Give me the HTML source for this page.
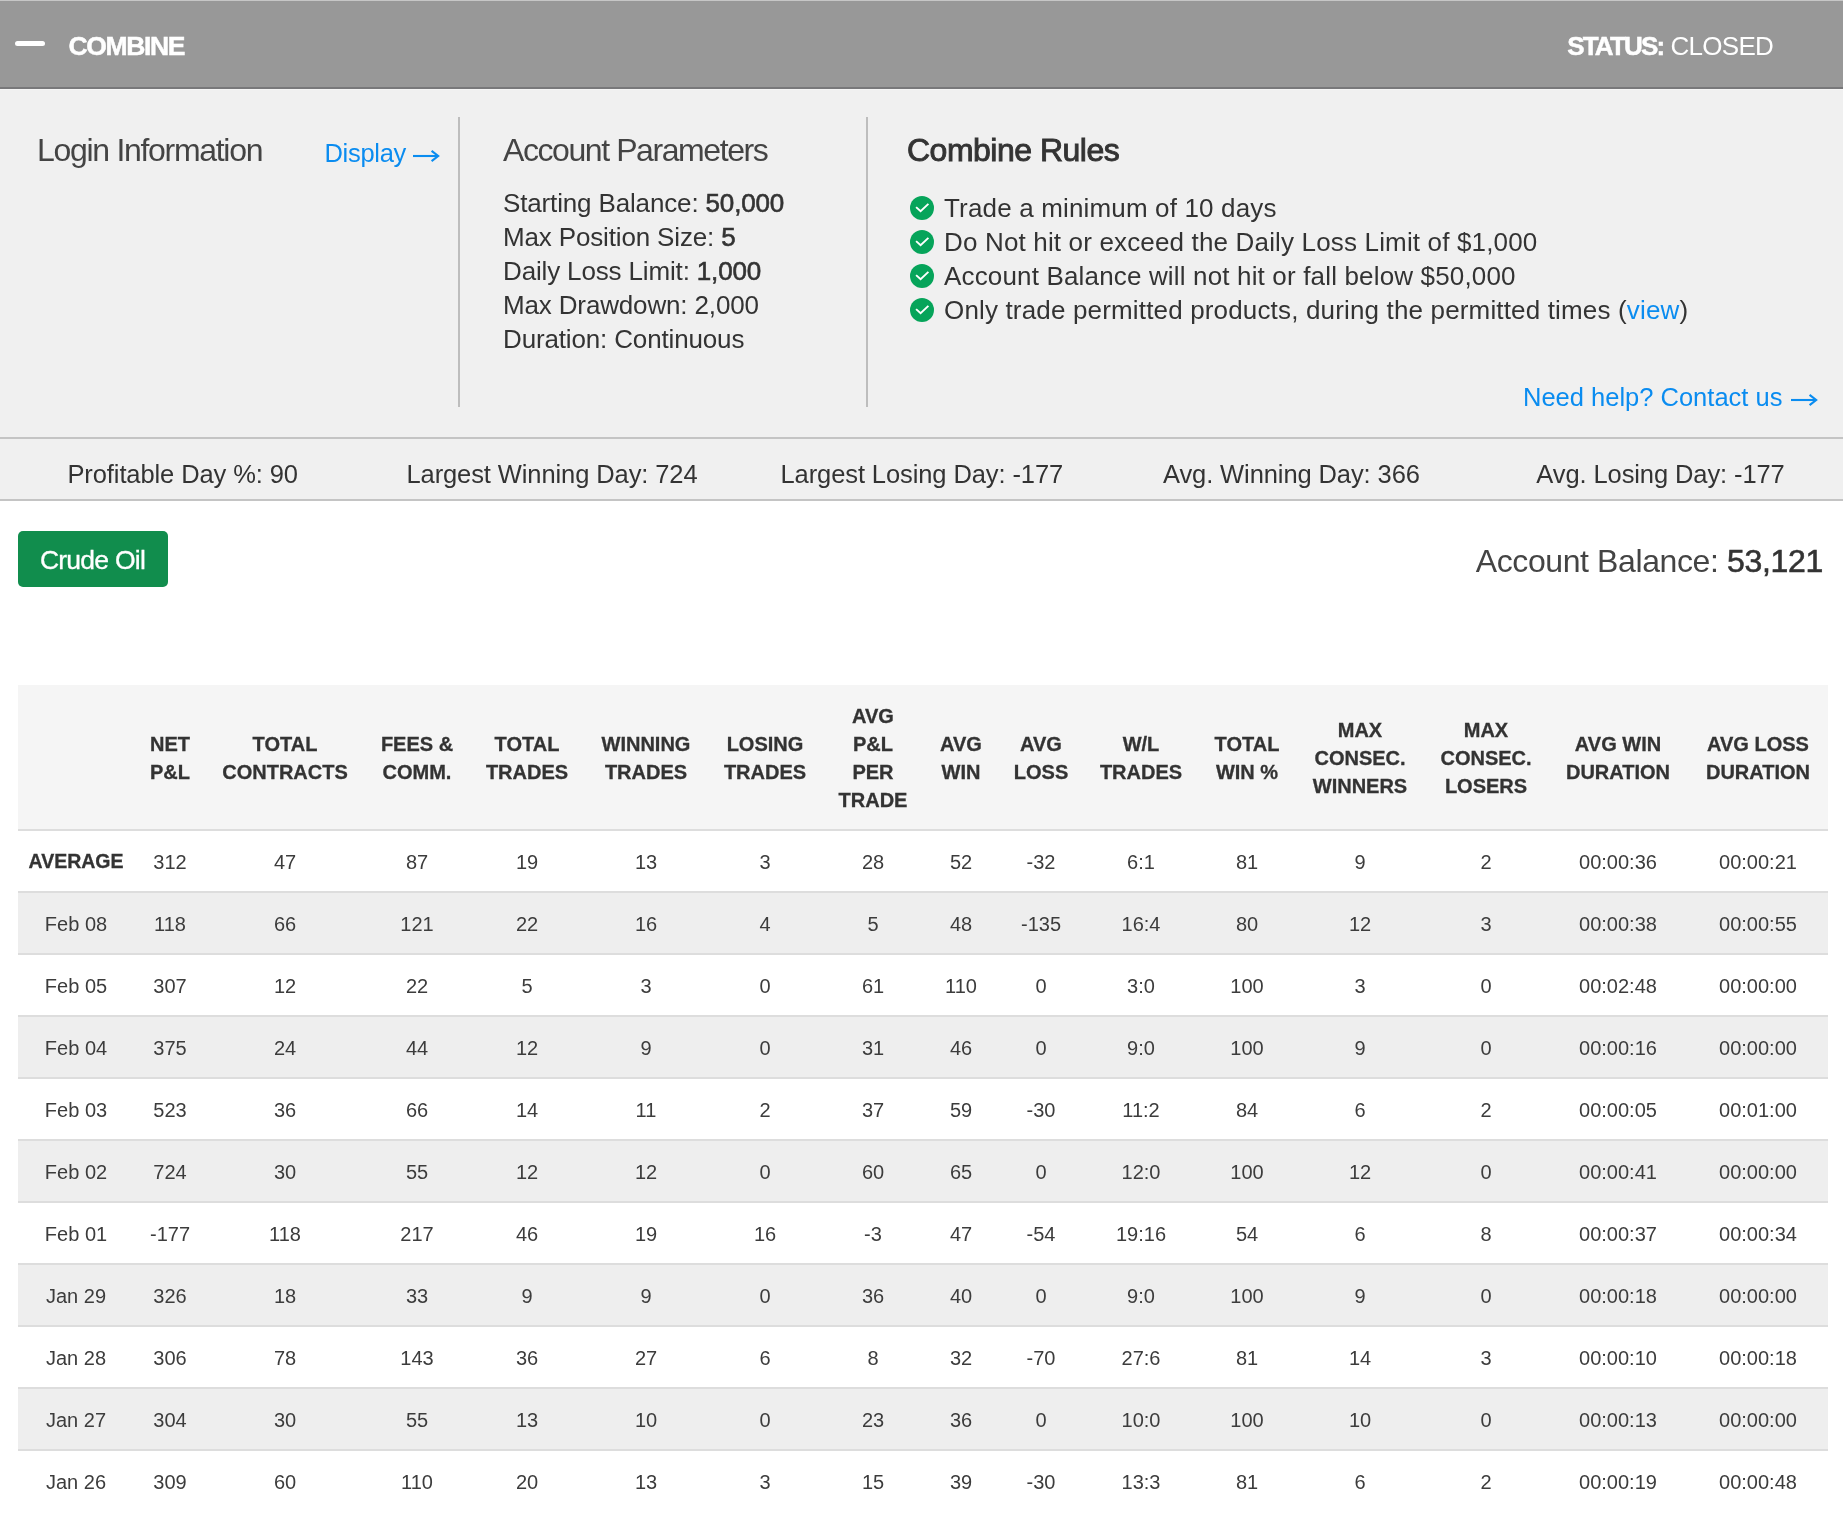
<!DOCTYPE html>
<html><head><meta charset="utf-8"><style>
html,body{margin:0;padding:0;background:#fff;}
body{width:1843px;height:1519px;position:relative;overflow:hidden;font-family:"Liberation Sans", sans-serif;}
.t{position:absolute;white-space:nowrap;}
.r{position:absolute;}
svg{display:block}
.md{-webkit-text-stroke:0.6px #333;}
.md2{-webkit-text-stroke:0.6px #333;letter-spacing:-0.3px}
</style></head><body>
<div id="wrap" style="position:absolute;left:0;top:0;width:1843px;height:1519px;will-change:transform">
<div class="r" style="left:0px;top:0px;width:1843px;height:1px;background:#c6c6c6;"></div>
<div class="r" style="left:0px;top:1px;width:1843px;height:86px;background:#989898;"></div>
<div class="r" style="left:0px;top:87px;width:1843px;height:2px;background:#78787a;"></div>
<div class="r" style="left:0px;top:89px;width:1843px;height:1px;background:#f5f5f5;"></div>
<div class="r" style="left:15px;top:40.6px;width:30px;height:5.4px;background:#fff;border-radius:3px;"></div>
<div class="t" style="top:30.41px;font-size:26.5px;line-height:32px;font-weight:700;color:#fff;letter-spacing:-1.35px;-webkit-text-stroke:0.5px #fff;left:68.5px;">COMBINE</div>
<div class="t" style="top:30.69px;font-size:26px;line-height:31px;font-weight:400;color:#fff;right:70px;text-align:right;"><span style="font-weight:700;-webkit-text-stroke:0.5px #fff;letter-spacing:-1.8px">STATUS:</span> <span style="letter-spacing:-0.75px">CLOSED</span></div>
<div class="r" style="left:0px;top:90px;width:1843px;height:347px;background:#f0f0f0;"></div>
<div class="t" style="top:131.11px;font-size:32px;line-height:38px;font-weight:400;color:#444;letter-spacing:-1.3px;left:37px;">Login Information</div>
<div class="t" style="top:138.46px;font-size:25.5px;line-height:31px;font-weight:400;color:#0a8cf0;letter-spacing:-0.3px;left:324.5px;">Display</div>
<div class="r" style="left:412.6px;top:149px;"><svg width="27.2" height="14" viewBox="0 0 27.2 14" style="display:block"><path d="M0 7 H24.2" stroke="#0a8cf0" stroke-width="2.1" fill="none"/><path d="M18.6 1.8 L25.2 7 L18.6 12.2" stroke="#0a8cf0" stroke-width="2.1" fill="none" stroke-linejoin="miter"/></svg></div>
<div class="r" style="left:458px;top:117px;width:2px;height:290px;background:#bdbdbd;"></div>
<div class="t" style="top:131.11px;font-size:32px;line-height:38px;font-weight:400;color:#444;letter-spacing:-1.42px;left:503px;">Account Parameters</div>
<div class="t" style="top:188.29px;font-size:26px;line-height:31px;font-weight:400;color:#333;letter-spacing:-0.15px;left:503px;">Starting Balance: <span class="md">50,000</span></div>
<div class="t" style="top:222.29px;font-size:26px;line-height:31px;font-weight:400;color:#333;letter-spacing:-0.15px;left:503px;">Max Position Size: <span class="md">5</span></div>
<div class="t" style="top:256.29px;font-size:26px;line-height:31px;font-weight:400;color:#333;letter-spacing:-0.15px;left:503px;">Daily Loss Limit: <span class="md">1,000</span></div>
<div class="t" style="top:290.29px;font-size:26px;line-height:31px;font-weight:400;color:#333;letter-spacing:-0.15px;left:503px;">Max Drawdown: 2,000</div>
<div class="t" style="top:324.29px;font-size:26px;line-height:31px;font-weight:400;color:#333;letter-spacing:-0.15px;left:503px;">Duration: Continuous</div>
<div class="r" style="left:866px;top:117px;width:2px;height:290px;background:#bdbdbd;"></div>
<div class="t" style="top:131.11px;font-size:32px;line-height:38px;font-weight:400;color:#333;letter-spacing:-0.5px;-webkit-text-stroke:0.9px #333;left:907px;">Combine Rules</div>
<div class="r" style="left:910px;top:195.9px;width:24px;height:24px"><svg width="24" height="24" viewBox="0 0 24 24"><circle cx="12" cy="12" r="12" fill="#06a45a"/><path d="M6.1 11.1 L10.6 15.3 L18.4 7.9" fill="none" stroke="#fff" stroke-width="1.9"/></svg></div>
<div class="t" style="top:192.69px;font-size:26px;line-height:31px;font-weight:400;color:#333;letter-spacing:0.16px;left:944px;">Trade a minimum of 10 days</div>
<div class="r" style="left:910px;top:229.9px;width:24px;height:24px"><svg width="24" height="24" viewBox="0 0 24 24"><circle cx="12" cy="12" r="12" fill="#06a45a"/><path d="M6.1 11.1 L10.6 15.3 L18.4 7.9" fill="none" stroke="#fff" stroke-width="1.9"/></svg></div>
<div class="t" style="top:226.69px;font-size:26px;line-height:31px;font-weight:400;color:#333;letter-spacing:0.16px;left:944px;">Do Not hit or exceed the Daily Loss Limit of $1,000</div>
<div class="r" style="left:910px;top:263.9px;width:24px;height:24px"><svg width="24" height="24" viewBox="0 0 24 24"><circle cx="12" cy="12" r="12" fill="#06a45a"/><path d="M6.1 11.1 L10.6 15.3 L18.4 7.9" fill="none" stroke="#fff" stroke-width="1.9"/></svg></div>
<div class="t" style="top:260.69px;font-size:26px;line-height:31px;font-weight:400;color:#333;letter-spacing:0.16px;left:944px;">Account Balance will not hit or fall below $50,000</div>
<div class="r" style="left:910px;top:297.9px;width:24px;height:24px"><svg width="24" height="24" viewBox="0 0 24 24"><circle cx="12" cy="12" r="12" fill="#06a45a"/><path d="M6.1 11.1 L10.6 15.3 L18.4 7.9" fill="none" stroke="#fff" stroke-width="1.9"/></svg></div>
<div class="t" style="top:294.69px;font-size:26px;line-height:31px;font-weight:400;color:#333;letter-spacing:0.16px;left:944px;">Only trade permitted products, during the permitted times (<span style="color:#0a8cf0">view</span>)</div>
<div class="t" style="top:382.36px;font-size:25.5px;line-height:31px;font-weight:400;color:#0a8cf0;left:1523px;">Need help? Contact us</div>
<div class="r" style="left:1790.6px;top:393px;"><svg width="27.2" height="14" viewBox="0 0 27.2 14" style="display:block"><path d="M0 7 H24.2" stroke="#0a8cf0" stroke-width="2.1" fill="none"/><path d="M18.6 1.8 L25.2 7 L18.6 12.2" stroke="#0a8cf0" stroke-width="2.1" fill="none" stroke-linejoin="miter"/></svg></div>
<div class="r" style="left:0px;top:437px;width:1843px;height:2px;background:#c4c4c4;"></div>
<div class="r" style="left:0px;top:439px;width:1843px;height:60px;background:#f0f0f0;"></div>
<div class="r" style="left:0px;top:499px;width:1843px;height:2px;background:#c4c4c4;"></div>
<div class="t" style="top:458.86px;font-size:25.5px;line-height:31px;font-weight:400;color:#333;letter-spacing:-0.1px;left:2.70px;width:360px;text-align:center;">Profitable Day %: 90</div>
<div class="t" style="top:458.86px;font-size:25.5px;line-height:31px;font-weight:400;color:#333;letter-spacing:-0.1px;left:372.00px;width:360px;text-align:center;">Largest Winning Day: 724</div>
<div class="t" style="top:458.86px;font-size:25.5px;line-height:31px;font-weight:400;color:#333;letter-spacing:-0.1px;left:741.80px;width:360px;text-align:center;">Largest Losing Day: -177</div>
<div class="t" style="top:458.86px;font-size:25.5px;line-height:31px;font-weight:400;color:#333;letter-spacing:-0.1px;left:1111.40px;width:360px;text-align:center;">Avg. Winning Day: 366</div>
<div class="t" style="top:458.86px;font-size:25.5px;line-height:31px;font-weight:400;color:#333;letter-spacing:-0.1px;left:1480.50px;width:360px;text-align:center;">Avg. Losing Day: -177</div>
<div class="r" style="left:18px;top:531px;width:150px;height:56px;background:#118d4d;border-radius:5px;"></div>
<div class="t" style="top:544.21px;font-size:26.5px;line-height:32px;font-weight:400;color:#fff;letter-spacing:-0.75px;-webkit-text-stroke:0.3px #fff;left:17.50px;width:150px;text-align:center;">Crude Oil</div>
<div class="t" style="top:542.41px;font-size:32px;line-height:38px;font-weight:400;color:#333;letter-spacing:-0.4px;right:20px;text-align:right;"><span style="color:#444">Account Balance:</span> <span class="md2">53,121</span></div>
<div class="r" style="left:18px;top:685px;width:1810px;height:144px;background:#f5f5f5;"></div>
<div class="r" style="left:18px;top:829px;width:1810px;height:2px;background:#dddddd;"></div>
<div class="t" style="top:732.27px;font-size:20px;line-height:24px;font-weight:700;color:#333;-webkit-text-stroke:0.3px #333;left:70.00px;width:200px;text-align:center;">NET</div>
<div class="t" style="top:760.27px;font-size:20px;line-height:24px;font-weight:700;color:#333;-webkit-text-stroke:0.3px #333;left:70.00px;width:200px;text-align:center;">P&amp;L</div>
<div class="t" style="top:732.27px;font-size:20px;line-height:24px;font-weight:700;color:#333;-webkit-text-stroke:0.3px #333;left:185.00px;width:200px;text-align:center;">TOTAL</div>
<div class="t" style="top:760.27px;font-size:20px;line-height:24px;font-weight:700;color:#333;-webkit-text-stroke:0.3px #333;left:185.00px;width:200px;text-align:center;">CONTRACTS</div>
<div class="t" style="top:732.27px;font-size:20px;line-height:24px;font-weight:700;color:#333;-webkit-text-stroke:0.3px #333;left:317.00px;width:200px;text-align:center;">FEES &amp;</div>
<div class="t" style="top:760.27px;font-size:20px;line-height:24px;font-weight:700;color:#333;-webkit-text-stroke:0.3px #333;left:317.00px;width:200px;text-align:center;">COMM.</div>
<div class="t" style="top:732.27px;font-size:20px;line-height:24px;font-weight:700;color:#333;-webkit-text-stroke:0.3px #333;left:427.00px;width:200px;text-align:center;">TOTAL</div>
<div class="t" style="top:760.27px;font-size:20px;line-height:24px;font-weight:700;color:#333;-webkit-text-stroke:0.3px #333;left:427.00px;width:200px;text-align:center;">TRADES</div>
<div class="t" style="top:732.27px;font-size:20px;line-height:24px;font-weight:700;color:#333;-webkit-text-stroke:0.3px #333;left:546.00px;width:200px;text-align:center;">WINNING</div>
<div class="t" style="top:760.27px;font-size:20px;line-height:24px;font-weight:700;color:#333;-webkit-text-stroke:0.3px #333;left:546.00px;width:200px;text-align:center;">TRADES</div>
<div class="t" style="top:732.27px;font-size:20px;line-height:24px;font-weight:700;color:#333;-webkit-text-stroke:0.3px #333;left:665.00px;width:200px;text-align:center;">LOSING</div>
<div class="t" style="top:760.27px;font-size:20px;line-height:24px;font-weight:700;color:#333;-webkit-text-stroke:0.3px #333;left:665.00px;width:200px;text-align:center;">TRADES</div>
<div class="t" style="top:704.27px;font-size:20px;line-height:24px;font-weight:700;color:#333;-webkit-text-stroke:0.3px #333;left:773.00px;width:200px;text-align:center;">AVG</div>
<div class="t" style="top:732.27px;font-size:20px;line-height:24px;font-weight:700;color:#333;-webkit-text-stroke:0.3px #333;left:773.00px;width:200px;text-align:center;">P&amp;L</div>
<div class="t" style="top:760.27px;font-size:20px;line-height:24px;font-weight:700;color:#333;-webkit-text-stroke:0.3px #333;left:773.00px;width:200px;text-align:center;">PER</div>
<div class="t" style="top:788.27px;font-size:20px;line-height:24px;font-weight:700;color:#333;-webkit-text-stroke:0.3px #333;left:773.00px;width:200px;text-align:center;">TRADE</div>
<div class="t" style="top:732.27px;font-size:20px;line-height:24px;font-weight:700;color:#333;-webkit-text-stroke:0.3px #333;left:861.00px;width:200px;text-align:center;">AVG</div>
<div class="t" style="top:760.27px;font-size:20px;line-height:24px;font-weight:700;color:#333;-webkit-text-stroke:0.3px #333;left:861.00px;width:200px;text-align:center;">WIN</div>
<div class="t" style="top:732.27px;font-size:20px;line-height:24px;font-weight:700;color:#333;-webkit-text-stroke:0.3px #333;left:941.00px;width:200px;text-align:center;">AVG</div>
<div class="t" style="top:760.27px;font-size:20px;line-height:24px;font-weight:700;color:#333;-webkit-text-stroke:0.3px #333;left:941.00px;width:200px;text-align:center;">LOSS</div>
<div class="t" style="top:732.27px;font-size:20px;line-height:24px;font-weight:700;color:#333;-webkit-text-stroke:0.3px #333;left:1041.00px;width:200px;text-align:center;">W/L</div>
<div class="t" style="top:760.27px;font-size:20px;line-height:24px;font-weight:700;color:#333;-webkit-text-stroke:0.3px #333;left:1041.00px;width:200px;text-align:center;">TRADES</div>
<div class="t" style="top:732.27px;font-size:20px;line-height:24px;font-weight:700;color:#333;-webkit-text-stroke:0.3px #333;left:1147.00px;width:200px;text-align:center;">TOTAL</div>
<div class="t" style="top:760.27px;font-size:20px;line-height:24px;font-weight:700;color:#333;-webkit-text-stroke:0.3px #333;left:1147.00px;width:200px;text-align:center;">WIN %</div>
<div class="t" style="top:718.27px;font-size:20px;line-height:24px;font-weight:700;color:#333;-webkit-text-stroke:0.3px #333;left:1260.00px;width:200px;text-align:center;">MAX</div>
<div class="t" style="top:746.27px;font-size:20px;line-height:24px;font-weight:700;color:#333;-webkit-text-stroke:0.3px #333;left:1260.00px;width:200px;text-align:center;">CONSEC.</div>
<div class="t" style="top:774.27px;font-size:20px;line-height:24px;font-weight:700;color:#333;-webkit-text-stroke:0.3px #333;left:1260.00px;width:200px;text-align:center;">WINNERS</div>
<div class="t" style="top:718.27px;font-size:20px;line-height:24px;font-weight:700;color:#333;-webkit-text-stroke:0.3px #333;left:1386.00px;width:200px;text-align:center;">MAX</div>
<div class="t" style="top:746.27px;font-size:20px;line-height:24px;font-weight:700;color:#333;-webkit-text-stroke:0.3px #333;left:1386.00px;width:200px;text-align:center;">CONSEC.</div>
<div class="t" style="top:774.27px;font-size:20px;line-height:24px;font-weight:700;color:#333;-webkit-text-stroke:0.3px #333;left:1386.00px;width:200px;text-align:center;">LOSERS</div>
<div class="t" style="top:732.27px;font-size:20px;line-height:24px;font-weight:700;color:#333;-webkit-text-stroke:0.3px #333;left:1518.00px;width:200px;text-align:center;">AVG WIN</div>
<div class="t" style="top:760.27px;font-size:20px;line-height:24px;font-weight:700;color:#333;-webkit-text-stroke:0.3px #333;left:1518.00px;width:200px;text-align:center;">DURATION</div>
<div class="t" style="top:732.27px;font-size:20px;line-height:24px;font-weight:700;color:#333;-webkit-text-stroke:0.3px #333;left:1658.00px;width:200px;text-align:center;">AVG LOSS</div>
<div class="t" style="top:760.27px;font-size:20px;line-height:24px;font-weight:700;color:#333;-webkit-text-stroke:0.3px #333;left:1658.00px;width:200px;text-align:center;">DURATION</div>
<div class="r" style="left:18px;top:891px;width:1810px;height:2px;background:#dddddd;"></div>
<div class="t" style="top:850.44px;font-size:19.5px;line-height:23px;font-weight:700;color:#333;-webkit-text-stroke:0.3px #333;left:-24.00px;width:200px;text-align:center;">AVERAGE</div>
<div class="t" style="top:849.77px;font-size:20px;line-height:24px;font-weight:400;color:#3c3c3c;left:70.00px;width:200px;text-align:center;">312</div>
<div class="t" style="top:849.77px;font-size:20px;line-height:24px;font-weight:400;color:#3c3c3c;left:185.00px;width:200px;text-align:center;">47</div>
<div class="t" style="top:849.77px;font-size:20px;line-height:24px;font-weight:400;color:#3c3c3c;left:317.00px;width:200px;text-align:center;">87</div>
<div class="t" style="top:849.77px;font-size:20px;line-height:24px;font-weight:400;color:#3c3c3c;left:427.00px;width:200px;text-align:center;">19</div>
<div class="t" style="top:849.77px;font-size:20px;line-height:24px;font-weight:400;color:#3c3c3c;left:546.00px;width:200px;text-align:center;">13</div>
<div class="t" style="top:849.77px;font-size:20px;line-height:24px;font-weight:400;color:#3c3c3c;left:665.00px;width:200px;text-align:center;">3</div>
<div class="t" style="top:849.77px;font-size:20px;line-height:24px;font-weight:400;color:#3c3c3c;left:773.00px;width:200px;text-align:center;">28</div>
<div class="t" style="top:849.77px;font-size:20px;line-height:24px;font-weight:400;color:#3c3c3c;left:861.00px;width:200px;text-align:center;">52</div>
<div class="t" style="top:849.77px;font-size:20px;line-height:24px;font-weight:400;color:#3c3c3c;left:941.00px;width:200px;text-align:center;">-32</div>
<div class="t" style="top:849.77px;font-size:20px;line-height:24px;font-weight:400;color:#3c3c3c;left:1041.00px;width:200px;text-align:center;">6:1</div>
<div class="t" style="top:849.77px;font-size:20px;line-height:24px;font-weight:400;color:#3c3c3c;left:1147.00px;width:200px;text-align:center;">81</div>
<div class="t" style="top:849.77px;font-size:20px;line-height:24px;font-weight:400;color:#3c3c3c;left:1260.00px;width:200px;text-align:center;">9</div>
<div class="t" style="top:849.77px;font-size:20px;line-height:24px;font-weight:400;color:#3c3c3c;left:1386.00px;width:200px;text-align:center;">2</div>
<div class="t" style="top:849.77px;font-size:20px;line-height:24px;font-weight:400;color:#3c3c3c;left:1518.00px;width:200px;text-align:center;">00:00:36</div>
<div class="t" style="top:849.77px;font-size:20px;line-height:24px;font-weight:400;color:#3c3c3c;left:1658.00px;width:200px;text-align:center;">00:00:21</div>
<div class="r" style="left:18px;top:893px;width:1810px;height:60px;background:#eeeeee;"></div>
<div class="r" style="left:18px;top:953px;width:1810px;height:2px;background:#dddddd;"></div>
<div class="t" style="top:911.77px;font-size:20px;line-height:24px;font-weight:400;color:#3c3c3c;left:-24.00px;width:200px;text-align:center;">Feb 08</div>
<div class="t" style="top:911.77px;font-size:20px;line-height:24px;font-weight:400;color:#3c3c3c;left:70.00px;width:200px;text-align:center;">118</div>
<div class="t" style="top:911.77px;font-size:20px;line-height:24px;font-weight:400;color:#3c3c3c;left:185.00px;width:200px;text-align:center;">66</div>
<div class="t" style="top:911.77px;font-size:20px;line-height:24px;font-weight:400;color:#3c3c3c;left:317.00px;width:200px;text-align:center;">121</div>
<div class="t" style="top:911.77px;font-size:20px;line-height:24px;font-weight:400;color:#3c3c3c;left:427.00px;width:200px;text-align:center;">22</div>
<div class="t" style="top:911.77px;font-size:20px;line-height:24px;font-weight:400;color:#3c3c3c;left:546.00px;width:200px;text-align:center;">16</div>
<div class="t" style="top:911.77px;font-size:20px;line-height:24px;font-weight:400;color:#3c3c3c;left:665.00px;width:200px;text-align:center;">4</div>
<div class="t" style="top:911.77px;font-size:20px;line-height:24px;font-weight:400;color:#3c3c3c;left:773.00px;width:200px;text-align:center;">5</div>
<div class="t" style="top:911.77px;font-size:20px;line-height:24px;font-weight:400;color:#3c3c3c;left:861.00px;width:200px;text-align:center;">48</div>
<div class="t" style="top:911.77px;font-size:20px;line-height:24px;font-weight:400;color:#3c3c3c;left:941.00px;width:200px;text-align:center;">-135</div>
<div class="t" style="top:911.77px;font-size:20px;line-height:24px;font-weight:400;color:#3c3c3c;left:1041.00px;width:200px;text-align:center;">16:4</div>
<div class="t" style="top:911.77px;font-size:20px;line-height:24px;font-weight:400;color:#3c3c3c;left:1147.00px;width:200px;text-align:center;">80</div>
<div class="t" style="top:911.77px;font-size:20px;line-height:24px;font-weight:400;color:#3c3c3c;left:1260.00px;width:200px;text-align:center;">12</div>
<div class="t" style="top:911.77px;font-size:20px;line-height:24px;font-weight:400;color:#3c3c3c;left:1386.00px;width:200px;text-align:center;">3</div>
<div class="t" style="top:911.77px;font-size:20px;line-height:24px;font-weight:400;color:#3c3c3c;left:1518.00px;width:200px;text-align:center;">00:00:38</div>
<div class="t" style="top:911.77px;font-size:20px;line-height:24px;font-weight:400;color:#3c3c3c;left:1658.00px;width:200px;text-align:center;">00:00:55</div>
<div class="r" style="left:18px;top:1015px;width:1810px;height:2px;background:#dddddd;"></div>
<div class="t" style="top:973.77px;font-size:20px;line-height:24px;font-weight:400;color:#3c3c3c;left:-24.00px;width:200px;text-align:center;">Feb 05</div>
<div class="t" style="top:973.77px;font-size:20px;line-height:24px;font-weight:400;color:#3c3c3c;left:70.00px;width:200px;text-align:center;">307</div>
<div class="t" style="top:973.77px;font-size:20px;line-height:24px;font-weight:400;color:#3c3c3c;left:185.00px;width:200px;text-align:center;">12</div>
<div class="t" style="top:973.77px;font-size:20px;line-height:24px;font-weight:400;color:#3c3c3c;left:317.00px;width:200px;text-align:center;">22</div>
<div class="t" style="top:973.77px;font-size:20px;line-height:24px;font-weight:400;color:#3c3c3c;left:427.00px;width:200px;text-align:center;">5</div>
<div class="t" style="top:973.77px;font-size:20px;line-height:24px;font-weight:400;color:#3c3c3c;left:546.00px;width:200px;text-align:center;">3</div>
<div class="t" style="top:973.77px;font-size:20px;line-height:24px;font-weight:400;color:#3c3c3c;left:665.00px;width:200px;text-align:center;">0</div>
<div class="t" style="top:973.77px;font-size:20px;line-height:24px;font-weight:400;color:#3c3c3c;left:773.00px;width:200px;text-align:center;">61</div>
<div class="t" style="top:973.77px;font-size:20px;line-height:24px;font-weight:400;color:#3c3c3c;left:861.00px;width:200px;text-align:center;">110</div>
<div class="t" style="top:973.77px;font-size:20px;line-height:24px;font-weight:400;color:#3c3c3c;left:941.00px;width:200px;text-align:center;">0</div>
<div class="t" style="top:973.77px;font-size:20px;line-height:24px;font-weight:400;color:#3c3c3c;left:1041.00px;width:200px;text-align:center;">3:0</div>
<div class="t" style="top:973.77px;font-size:20px;line-height:24px;font-weight:400;color:#3c3c3c;left:1147.00px;width:200px;text-align:center;">100</div>
<div class="t" style="top:973.77px;font-size:20px;line-height:24px;font-weight:400;color:#3c3c3c;left:1260.00px;width:200px;text-align:center;">3</div>
<div class="t" style="top:973.77px;font-size:20px;line-height:24px;font-weight:400;color:#3c3c3c;left:1386.00px;width:200px;text-align:center;">0</div>
<div class="t" style="top:973.77px;font-size:20px;line-height:24px;font-weight:400;color:#3c3c3c;left:1518.00px;width:200px;text-align:center;">00:02:48</div>
<div class="t" style="top:973.77px;font-size:20px;line-height:24px;font-weight:400;color:#3c3c3c;left:1658.00px;width:200px;text-align:center;">00:00:00</div>
<div class="r" style="left:18px;top:1017px;width:1810px;height:60px;background:#eeeeee;"></div>
<div class="r" style="left:18px;top:1077px;width:1810px;height:2px;background:#dddddd;"></div>
<div class="t" style="top:1035.77px;font-size:20px;line-height:24px;font-weight:400;color:#3c3c3c;left:-24.00px;width:200px;text-align:center;">Feb 04</div>
<div class="t" style="top:1035.77px;font-size:20px;line-height:24px;font-weight:400;color:#3c3c3c;left:70.00px;width:200px;text-align:center;">375</div>
<div class="t" style="top:1035.77px;font-size:20px;line-height:24px;font-weight:400;color:#3c3c3c;left:185.00px;width:200px;text-align:center;">24</div>
<div class="t" style="top:1035.77px;font-size:20px;line-height:24px;font-weight:400;color:#3c3c3c;left:317.00px;width:200px;text-align:center;">44</div>
<div class="t" style="top:1035.77px;font-size:20px;line-height:24px;font-weight:400;color:#3c3c3c;left:427.00px;width:200px;text-align:center;">12</div>
<div class="t" style="top:1035.77px;font-size:20px;line-height:24px;font-weight:400;color:#3c3c3c;left:546.00px;width:200px;text-align:center;">9</div>
<div class="t" style="top:1035.77px;font-size:20px;line-height:24px;font-weight:400;color:#3c3c3c;left:665.00px;width:200px;text-align:center;">0</div>
<div class="t" style="top:1035.77px;font-size:20px;line-height:24px;font-weight:400;color:#3c3c3c;left:773.00px;width:200px;text-align:center;">31</div>
<div class="t" style="top:1035.77px;font-size:20px;line-height:24px;font-weight:400;color:#3c3c3c;left:861.00px;width:200px;text-align:center;">46</div>
<div class="t" style="top:1035.77px;font-size:20px;line-height:24px;font-weight:400;color:#3c3c3c;left:941.00px;width:200px;text-align:center;">0</div>
<div class="t" style="top:1035.77px;font-size:20px;line-height:24px;font-weight:400;color:#3c3c3c;left:1041.00px;width:200px;text-align:center;">9:0</div>
<div class="t" style="top:1035.77px;font-size:20px;line-height:24px;font-weight:400;color:#3c3c3c;left:1147.00px;width:200px;text-align:center;">100</div>
<div class="t" style="top:1035.77px;font-size:20px;line-height:24px;font-weight:400;color:#3c3c3c;left:1260.00px;width:200px;text-align:center;">9</div>
<div class="t" style="top:1035.77px;font-size:20px;line-height:24px;font-weight:400;color:#3c3c3c;left:1386.00px;width:200px;text-align:center;">0</div>
<div class="t" style="top:1035.77px;font-size:20px;line-height:24px;font-weight:400;color:#3c3c3c;left:1518.00px;width:200px;text-align:center;">00:00:16</div>
<div class="t" style="top:1035.77px;font-size:20px;line-height:24px;font-weight:400;color:#3c3c3c;left:1658.00px;width:200px;text-align:center;">00:00:00</div>
<div class="r" style="left:18px;top:1139px;width:1810px;height:2px;background:#dddddd;"></div>
<div class="t" style="top:1097.77px;font-size:20px;line-height:24px;font-weight:400;color:#3c3c3c;left:-24.00px;width:200px;text-align:center;">Feb 03</div>
<div class="t" style="top:1097.77px;font-size:20px;line-height:24px;font-weight:400;color:#3c3c3c;left:70.00px;width:200px;text-align:center;">523</div>
<div class="t" style="top:1097.77px;font-size:20px;line-height:24px;font-weight:400;color:#3c3c3c;left:185.00px;width:200px;text-align:center;">36</div>
<div class="t" style="top:1097.77px;font-size:20px;line-height:24px;font-weight:400;color:#3c3c3c;left:317.00px;width:200px;text-align:center;">66</div>
<div class="t" style="top:1097.77px;font-size:20px;line-height:24px;font-weight:400;color:#3c3c3c;left:427.00px;width:200px;text-align:center;">14</div>
<div class="t" style="top:1097.77px;font-size:20px;line-height:24px;font-weight:400;color:#3c3c3c;left:546.00px;width:200px;text-align:center;">11</div>
<div class="t" style="top:1097.77px;font-size:20px;line-height:24px;font-weight:400;color:#3c3c3c;left:665.00px;width:200px;text-align:center;">2</div>
<div class="t" style="top:1097.77px;font-size:20px;line-height:24px;font-weight:400;color:#3c3c3c;left:773.00px;width:200px;text-align:center;">37</div>
<div class="t" style="top:1097.77px;font-size:20px;line-height:24px;font-weight:400;color:#3c3c3c;left:861.00px;width:200px;text-align:center;">59</div>
<div class="t" style="top:1097.77px;font-size:20px;line-height:24px;font-weight:400;color:#3c3c3c;left:941.00px;width:200px;text-align:center;">-30</div>
<div class="t" style="top:1097.77px;font-size:20px;line-height:24px;font-weight:400;color:#3c3c3c;left:1041.00px;width:200px;text-align:center;">11:2</div>
<div class="t" style="top:1097.77px;font-size:20px;line-height:24px;font-weight:400;color:#3c3c3c;left:1147.00px;width:200px;text-align:center;">84</div>
<div class="t" style="top:1097.77px;font-size:20px;line-height:24px;font-weight:400;color:#3c3c3c;left:1260.00px;width:200px;text-align:center;">6</div>
<div class="t" style="top:1097.77px;font-size:20px;line-height:24px;font-weight:400;color:#3c3c3c;left:1386.00px;width:200px;text-align:center;">2</div>
<div class="t" style="top:1097.77px;font-size:20px;line-height:24px;font-weight:400;color:#3c3c3c;left:1518.00px;width:200px;text-align:center;">00:00:05</div>
<div class="t" style="top:1097.77px;font-size:20px;line-height:24px;font-weight:400;color:#3c3c3c;left:1658.00px;width:200px;text-align:center;">00:01:00</div>
<div class="r" style="left:18px;top:1141px;width:1810px;height:60px;background:#eeeeee;"></div>
<div class="r" style="left:18px;top:1201px;width:1810px;height:2px;background:#dddddd;"></div>
<div class="t" style="top:1159.77px;font-size:20px;line-height:24px;font-weight:400;color:#3c3c3c;left:-24.00px;width:200px;text-align:center;">Feb 02</div>
<div class="t" style="top:1159.77px;font-size:20px;line-height:24px;font-weight:400;color:#3c3c3c;left:70.00px;width:200px;text-align:center;">724</div>
<div class="t" style="top:1159.77px;font-size:20px;line-height:24px;font-weight:400;color:#3c3c3c;left:185.00px;width:200px;text-align:center;">30</div>
<div class="t" style="top:1159.77px;font-size:20px;line-height:24px;font-weight:400;color:#3c3c3c;left:317.00px;width:200px;text-align:center;">55</div>
<div class="t" style="top:1159.77px;font-size:20px;line-height:24px;font-weight:400;color:#3c3c3c;left:427.00px;width:200px;text-align:center;">12</div>
<div class="t" style="top:1159.77px;font-size:20px;line-height:24px;font-weight:400;color:#3c3c3c;left:546.00px;width:200px;text-align:center;">12</div>
<div class="t" style="top:1159.77px;font-size:20px;line-height:24px;font-weight:400;color:#3c3c3c;left:665.00px;width:200px;text-align:center;">0</div>
<div class="t" style="top:1159.77px;font-size:20px;line-height:24px;font-weight:400;color:#3c3c3c;left:773.00px;width:200px;text-align:center;">60</div>
<div class="t" style="top:1159.77px;font-size:20px;line-height:24px;font-weight:400;color:#3c3c3c;left:861.00px;width:200px;text-align:center;">65</div>
<div class="t" style="top:1159.77px;font-size:20px;line-height:24px;font-weight:400;color:#3c3c3c;left:941.00px;width:200px;text-align:center;">0</div>
<div class="t" style="top:1159.77px;font-size:20px;line-height:24px;font-weight:400;color:#3c3c3c;left:1041.00px;width:200px;text-align:center;">12:0</div>
<div class="t" style="top:1159.77px;font-size:20px;line-height:24px;font-weight:400;color:#3c3c3c;left:1147.00px;width:200px;text-align:center;">100</div>
<div class="t" style="top:1159.77px;font-size:20px;line-height:24px;font-weight:400;color:#3c3c3c;left:1260.00px;width:200px;text-align:center;">12</div>
<div class="t" style="top:1159.77px;font-size:20px;line-height:24px;font-weight:400;color:#3c3c3c;left:1386.00px;width:200px;text-align:center;">0</div>
<div class="t" style="top:1159.77px;font-size:20px;line-height:24px;font-weight:400;color:#3c3c3c;left:1518.00px;width:200px;text-align:center;">00:00:41</div>
<div class="t" style="top:1159.77px;font-size:20px;line-height:24px;font-weight:400;color:#3c3c3c;left:1658.00px;width:200px;text-align:center;">00:00:00</div>
<div class="r" style="left:18px;top:1263px;width:1810px;height:2px;background:#dddddd;"></div>
<div class="t" style="top:1221.77px;font-size:20px;line-height:24px;font-weight:400;color:#3c3c3c;left:-24.00px;width:200px;text-align:center;">Feb 01</div>
<div class="t" style="top:1221.77px;font-size:20px;line-height:24px;font-weight:400;color:#3c3c3c;left:70.00px;width:200px;text-align:center;">-177</div>
<div class="t" style="top:1221.77px;font-size:20px;line-height:24px;font-weight:400;color:#3c3c3c;left:185.00px;width:200px;text-align:center;">118</div>
<div class="t" style="top:1221.77px;font-size:20px;line-height:24px;font-weight:400;color:#3c3c3c;left:317.00px;width:200px;text-align:center;">217</div>
<div class="t" style="top:1221.77px;font-size:20px;line-height:24px;font-weight:400;color:#3c3c3c;left:427.00px;width:200px;text-align:center;">46</div>
<div class="t" style="top:1221.77px;font-size:20px;line-height:24px;font-weight:400;color:#3c3c3c;left:546.00px;width:200px;text-align:center;">19</div>
<div class="t" style="top:1221.77px;font-size:20px;line-height:24px;font-weight:400;color:#3c3c3c;left:665.00px;width:200px;text-align:center;">16</div>
<div class="t" style="top:1221.77px;font-size:20px;line-height:24px;font-weight:400;color:#3c3c3c;left:773.00px;width:200px;text-align:center;">-3</div>
<div class="t" style="top:1221.77px;font-size:20px;line-height:24px;font-weight:400;color:#3c3c3c;left:861.00px;width:200px;text-align:center;">47</div>
<div class="t" style="top:1221.77px;font-size:20px;line-height:24px;font-weight:400;color:#3c3c3c;left:941.00px;width:200px;text-align:center;">-54</div>
<div class="t" style="top:1221.77px;font-size:20px;line-height:24px;font-weight:400;color:#3c3c3c;left:1041.00px;width:200px;text-align:center;">19:16</div>
<div class="t" style="top:1221.77px;font-size:20px;line-height:24px;font-weight:400;color:#3c3c3c;left:1147.00px;width:200px;text-align:center;">54</div>
<div class="t" style="top:1221.77px;font-size:20px;line-height:24px;font-weight:400;color:#3c3c3c;left:1260.00px;width:200px;text-align:center;">6</div>
<div class="t" style="top:1221.77px;font-size:20px;line-height:24px;font-weight:400;color:#3c3c3c;left:1386.00px;width:200px;text-align:center;">8</div>
<div class="t" style="top:1221.77px;font-size:20px;line-height:24px;font-weight:400;color:#3c3c3c;left:1518.00px;width:200px;text-align:center;">00:00:37</div>
<div class="t" style="top:1221.77px;font-size:20px;line-height:24px;font-weight:400;color:#3c3c3c;left:1658.00px;width:200px;text-align:center;">00:00:34</div>
<div class="r" style="left:18px;top:1265px;width:1810px;height:60px;background:#eeeeee;"></div>
<div class="r" style="left:18px;top:1325px;width:1810px;height:2px;background:#dddddd;"></div>
<div class="t" style="top:1283.77px;font-size:20px;line-height:24px;font-weight:400;color:#3c3c3c;left:-24.00px;width:200px;text-align:center;">Jan 29</div>
<div class="t" style="top:1283.77px;font-size:20px;line-height:24px;font-weight:400;color:#3c3c3c;left:70.00px;width:200px;text-align:center;">326</div>
<div class="t" style="top:1283.77px;font-size:20px;line-height:24px;font-weight:400;color:#3c3c3c;left:185.00px;width:200px;text-align:center;">18</div>
<div class="t" style="top:1283.77px;font-size:20px;line-height:24px;font-weight:400;color:#3c3c3c;left:317.00px;width:200px;text-align:center;">33</div>
<div class="t" style="top:1283.77px;font-size:20px;line-height:24px;font-weight:400;color:#3c3c3c;left:427.00px;width:200px;text-align:center;">9</div>
<div class="t" style="top:1283.77px;font-size:20px;line-height:24px;font-weight:400;color:#3c3c3c;left:546.00px;width:200px;text-align:center;">9</div>
<div class="t" style="top:1283.77px;font-size:20px;line-height:24px;font-weight:400;color:#3c3c3c;left:665.00px;width:200px;text-align:center;">0</div>
<div class="t" style="top:1283.77px;font-size:20px;line-height:24px;font-weight:400;color:#3c3c3c;left:773.00px;width:200px;text-align:center;">36</div>
<div class="t" style="top:1283.77px;font-size:20px;line-height:24px;font-weight:400;color:#3c3c3c;left:861.00px;width:200px;text-align:center;">40</div>
<div class="t" style="top:1283.77px;font-size:20px;line-height:24px;font-weight:400;color:#3c3c3c;left:941.00px;width:200px;text-align:center;">0</div>
<div class="t" style="top:1283.77px;font-size:20px;line-height:24px;font-weight:400;color:#3c3c3c;left:1041.00px;width:200px;text-align:center;">9:0</div>
<div class="t" style="top:1283.77px;font-size:20px;line-height:24px;font-weight:400;color:#3c3c3c;left:1147.00px;width:200px;text-align:center;">100</div>
<div class="t" style="top:1283.77px;font-size:20px;line-height:24px;font-weight:400;color:#3c3c3c;left:1260.00px;width:200px;text-align:center;">9</div>
<div class="t" style="top:1283.77px;font-size:20px;line-height:24px;font-weight:400;color:#3c3c3c;left:1386.00px;width:200px;text-align:center;">0</div>
<div class="t" style="top:1283.77px;font-size:20px;line-height:24px;font-weight:400;color:#3c3c3c;left:1518.00px;width:200px;text-align:center;">00:00:18</div>
<div class="t" style="top:1283.77px;font-size:20px;line-height:24px;font-weight:400;color:#3c3c3c;left:1658.00px;width:200px;text-align:center;">00:00:00</div>
<div class="r" style="left:18px;top:1387px;width:1810px;height:2px;background:#dddddd;"></div>
<div class="t" style="top:1345.77px;font-size:20px;line-height:24px;font-weight:400;color:#3c3c3c;left:-24.00px;width:200px;text-align:center;">Jan 28</div>
<div class="t" style="top:1345.77px;font-size:20px;line-height:24px;font-weight:400;color:#3c3c3c;left:70.00px;width:200px;text-align:center;">306</div>
<div class="t" style="top:1345.77px;font-size:20px;line-height:24px;font-weight:400;color:#3c3c3c;left:185.00px;width:200px;text-align:center;">78</div>
<div class="t" style="top:1345.77px;font-size:20px;line-height:24px;font-weight:400;color:#3c3c3c;left:317.00px;width:200px;text-align:center;">143</div>
<div class="t" style="top:1345.77px;font-size:20px;line-height:24px;font-weight:400;color:#3c3c3c;left:427.00px;width:200px;text-align:center;">36</div>
<div class="t" style="top:1345.77px;font-size:20px;line-height:24px;font-weight:400;color:#3c3c3c;left:546.00px;width:200px;text-align:center;">27</div>
<div class="t" style="top:1345.77px;font-size:20px;line-height:24px;font-weight:400;color:#3c3c3c;left:665.00px;width:200px;text-align:center;">6</div>
<div class="t" style="top:1345.77px;font-size:20px;line-height:24px;font-weight:400;color:#3c3c3c;left:773.00px;width:200px;text-align:center;">8</div>
<div class="t" style="top:1345.77px;font-size:20px;line-height:24px;font-weight:400;color:#3c3c3c;left:861.00px;width:200px;text-align:center;">32</div>
<div class="t" style="top:1345.77px;font-size:20px;line-height:24px;font-weight:400;color:#3c3c3c;left:941.00px;width:200px;text-align:center;">-70</div>
<div class="t" style="top:1345.77px;font-size:20px;line-height:24px;font-weight:400;color:#3c3c3c;left:1041.00px;width:200px;text-align:center;">27:6</div>
<div class="t" style="top:1345.77px;font-size:20px;line-height:24px;font-weight:400;color:#3c3c3c;left:1147.00px;width:200px;text-align:center;">81</div>
<div class="t" style="top:1345.77px;font-size:20px;line-height:24px;font-weight:400;color:#3c3c3c;left:1260.00px;width:200px;text-align:center;">14</div>
<div class="t" style="top:1345.77px;font-size:20px;line-height:24px;font-weight:400;color:#3c3c3c;left:1386.00px;width:200px;text-align:center;">3</div>
<div class="t" style="top:1345.77px;font-size:20px;line-height:24px;font-weight:400;color:#3c3c3c;left:1518.00px;width:200px;text-align:center;">00:00:10</div>
<div class="t" style="top:1345.77px;font-size:20px;line-height:24px;font-weight:400;color:#3c3c3c;left:1658.00px;width:200px;text-align:center;">00:00:18</div>
<div class="r" style="left:18px;top:1389px;width:1810px;height:60px;background:#eeeeee;"></div>
<div class="r" style="left:18px;top:1449px;width:1810px;height:2px;background:#dddddd;"></div>
<div class="t" style="top:1407.77px;font-size:20px;line-height:24px;font-weight:400;color:#3c3c3c;left:-24.00px;width:200px;text-align:center;">Jan 27</div>
<div class="t" style="top:1407.77px;font-size:20px;line-height:24px;font-weight:400;color:#3c3c3c;left:70.00px;width:200px;text-align:center;">304</div>
<div class="t" style="top:1407.77px;font-size:20px;line-height:24px;font-weight:400;color:#3c3c3c;left:185.00px;width:200px;text-align:center;">30</div>
<div class="t" style="top:1407.77px;font-size:20px;line-height:24px;font-weight:400;color:#3c3c3c;left:317.00px;width:200px;text-align:center;">55</div>
<div class="t" style="top:1407.77px;font-size:20px;line-height:24px;font-weight:400;color:#3c3c3c;left:427.00px;width:200px;text-align:center;">13</div>
<div class="t" style="top:1407.77px;font-size:20px;line-height:24px;font-weight:400;color:#3c3c3c;left:546.00px;width:200px;text-align:center;">10</div>
<div class="t" style="top:1407.77px;font-size:20px;line-height:24px;font-weight:400;color:#3c3c3c;left:665.00px;width:200px;text-align:center;">0</div>
<div class="t" style="top:1407.77px;font-size:20px;line-height:24px;font-weight:400;color:#3c3c3c;left:773.00px;width:200px;text-align:center;">23</div>
<div class="t" style="top:1407.77px;font-size:20px;line-height:24px;font-weight:400;color:#3c3c3c;left:861.00px;width:200px;text-align:center;">36</div>
<div class="t" style="top:1407.77px;font-size:20px;line-height:24px;font-weight:400;color:#3c3c3c;left:941.00px;width:200px;text-align:center;">0</div>
<div class="t" style="top:1407.77px;font-size:20px;line-height:24px;font-weight:400;color:#3c3c3c;left:1041.00px;width:200px;text-align:center;">10:0</div>
<div class="t" style="top:1407.77px;font-size:20px;line-height:24px;font-weight:400;color:#3c3c3c;left:1147.00px;width:200px;text-align:center;">100</div>
<div class="t" style="top:1407.77px;font-size:20px;line-height:24px;font-weight:400;color:#3c3c3c;left:1260.00px;width:200px;text-align:center;">10</div>
<div class="t" style="top:1407.77px;font-size:20px;line-height:24px;font-weight:400;color:#3c3c3c;left:1386.00px;width:200px;text-align:center;">0</div>
<div class="t" style="top:1407.77px;font-size:20px;line-height:24px;font-weight:400;color:#3c3c3c;left:1518.00px;width:200px;text-align:center;">00:00:13</div>
<div class="t" style="top:1407.77px;font-size:20px;line-height:24px;font-weight:400;color:#3c3c3c;left:1658.00px;width:200px;text-align:center;">00:00:00</div>
<div class="t" style="top:1469.77px;font-size:20px;line-height:24px;font-weight:400;color:#3c3c3c;left:-24.00px;width:200px;text-align:center;">Jan 26</div>
<div class="t" style="top:1469.77px;font-size:20px;line-height:24px;font-weight:400;color:#3c3c3c;left:70.00px;width:200px;text-align:center;">309</div>
<div class="t" style="top:1469.77px;font-size:20px;line-height:24px;font-weight:400;color:#3c3c3c;left:185.00px;width:200px;text-align:center;">60</div>
<div class="t" style="top:1469.77px;font-size:20px;line-height:24px;font-weight:400;color:#3c3c3c;left:317.00px;width:200px;text-align:center;">110</div>
<div class="t" style="top:1469.77px;font-size:20px;line-height:24px;font-weight:400;color:#3c3c3c;left:427.00px;width:200px;text-align:center;">20</div>
<div class="t" style="top:1469.77px;font-size:20px;line-height:24px;font-weight:400;color:#3c3c3c;left:546.00px;width:200px;text-align:center;">13</div>
<div class="t" style="top:1469.77px;font-size:20px;line-height:24px;font-weight:400;color:#3c3c3c;left:665.00px;width:200px;text-align:center;">3</div>
<div class="t" style="top:1469.77px;font-size:20px;line-height:24px;font-weight:400;color:#3c3c3c;left:773.00px;width:200px;text-align:center;">15</div>
<div class="t" style="top:1469.77px;font-size:20px;line-height:24px;font-weight:400;color:#3c3c3c;left:861.00px;width:200px;text-align:center;">39</div>
<div class="t" style="top:1469.77px;font-size:20px;line-height:24px;font-weight:400;color:#3c3c3c;left:941.00px;width:200px;text-align:center;">-30</div>
<div class="t" style="top:1469.77px;font-size:20px;line-height:24px;font-weight:400;color:#3c3c3c;left:1041.00px;width:200px;text-align:center;">13:3</div>
<div class="t" style="top:1469.77px;font-size:20px;line-height:24px;font-weight:400;color:#3c3c3c;left:1147.00px;width:200px;text-align:center;">81</div>
<div class="t" style="top:1469.77px;font-size:20px;line-height:24px;font-weight:400;color:#3c3c3c;left:1260.00px;width:200px;text-align:center;">6</div>
<div class="t" style="top:1469.77px;font-size:20px;line-height:24px;font-weight:400;color:#3c3c3c;left:1386.00px;width:200px;text-align:center;">2</div>
<div class="t" style="top:1469.77px;font-size:20px;line-height:24px;font-weight:400;color:#3c3c3c;left:1518.00px;width:200px;text-align:center;">00:00:19</div>
<div class="t" style="top:1469.77px;font-size:20px;line-height:24px;font-weight:400;color:#3c3c3c;left:1658.00px;width:200px;text-align:center;">00:00:48</div>
</div>
</body></html>
